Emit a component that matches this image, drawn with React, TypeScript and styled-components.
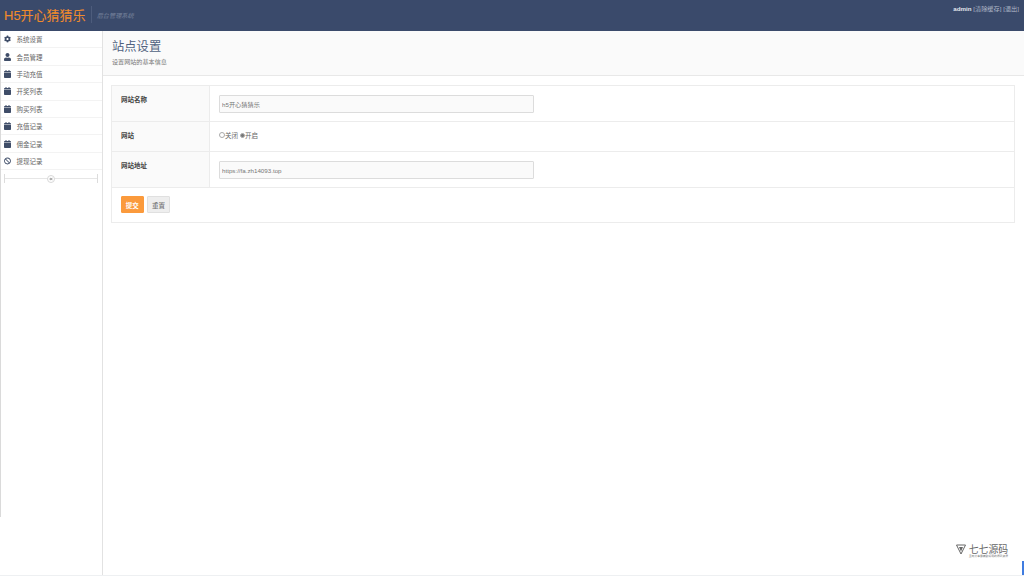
import { createGlobalStyle } from 'styled-components';
import styled from 'styled-components';
import { FaCog, FaUser, FaCalendar, FaBan, FaAngleDoubleLeft } from 'react-icons/fa';

const GlobalStyle = createGlobalStyle`
    html, body {
        margin: 0;
        padding: 0;
        height: 100%;
        background: #fff;
        overflow: hidden;
    }
    body {
        font-family: "Liberation Sans", "Noto Sans CJK SC", sans-serif;
    }
    #root {
        height: 100%;
    }
`

const Page = styled.div`
    position: relative;
    width: 1024px;
    height: 576px;
    display: flex;
    flex-direction: column;
    overflow: hidden;
`

const Navbar = styled.header`
    height: 31px;
    flex: none;
    background: #3a4a6b;
    display: flex;
    justify-content: space-between;
    padding: 0 5px 0 4px;
    box-sizing: border-box;
`

const Brand = styled.div`
    display: flex;
    align-items: center;
    height: 29px;
`

const BrandName = styled.span`
    font-size: 13px;
    color: #f08a2c;
    white-space: nowrap;
    -webkit-text-stroke: 0.1px #f08a2c;
`

const BrandSub = styled.span`
    margin-left: 5px;
    padding-left: 5px;
    height: 17px;
    line-height: 19px;
    border-left: 1px solid #4d5c7c;
    font-size: 6.2px;
    font-style: italic;
    color: #76829b;
`

const UserBar = styled.div`
    padding-top: 4.5px;
    font-size: 6.2px;
    line-height: 8px;
    color: #aeb6c6;
    white-space: nowrap;

    b {
        font-weight: 700;
        color: #e4e7ee;
    }
`

const Body = styled.div`
    flex: 1;
    display: flex;
    min-height: 0;
    border-bottom: 1px solid #eef0f2;
`

const Sidebar = styled.aside`
    position: relative;
    width: 103px;
    flex: none;
    box-sizing: border-box;
    border-right: 1px solid #e2e2e2;
    background: #fff;

    &::before {
        content: "";
        position: absolute;
        left: 0;
        top: 0;
        height: 486px;
        width: 1px;
        background: #dadada;
    }
`

const MenuItem = styled.div`
    height: 17.4px;
    box-sizing: border-box;
    display: flex;
    align-items: center;
    padding-left: 4px;
    border-bottom: 1px solid #f3f3f3;
    color: #666;
    font-size: 6.5px;
    white-space: nowrap;

    svg {
        width: 7px;
        height: 8px;
        color: #3f4d68;
        flex: none;
        margin-right: 5.5px;
    }
`

const Collapse = styled.div`
    position: relative;
    margin: 4px 4px 0 4px;
    height: 9px;
    border-left: 1px solid #dcdcdc;
    border-right: 1px solid #dcdcdc;
    display: flex;
    align-items: center;
    justify-content: center;

    &::before {
        content: "";
        position: absolute;
        left: 0;
        right: 0;
        top: 4px;
        border-top: 1px solid #e6e6e6;
    }
`

const CollapseButton = styled.span`
    position: relative;
    width: 8px;
    height: 8px;
    box-sizing: border-box;
    border: 1px solid #d8d8d8;
    border-radius: 50%;
    background: #fff;
    color: #888;
    display: flex;
    align-items: center;
    justify-content: center;

    svg {
        width: 4px;
        height: 4px;
    }
`

const Main = styled.main`
    flex: 1;
    min-width: 0;
`

const PageHeader = styled.div`
    height: 45px;
    box-sizing: border-box;
    padding: 9px 9px 0;
    background: #fafafa;
    border-bottom: 1px solid #e8e8e8;
`

const Title = styled.h1`
    margin: 0;
    font-size: 12.3px;
    line-height: 15px;
    font-weight: 400;
    color: #50627f;
`

const SubTitle = styled.p`
    margin: 3px 0 0;
    font-size: 6.1px;
    line-height: 8px;
    color: #777;
`

const Card = styled.section`
    margin: 9px 9px 0 8px;
    border: 1px solid #ececec;
`

const Row = styled.div<{ $height: number }>`
    display: flex;
    height: ${(p) => p.$height}px;
    border-bottom: 1px solid #ececec;
    box-sizing: border-box;
`

const Label = styled.div`
    width: 98px;
    flex: none;
    box-sizing: border-box;
    background: #fafafa;
    border-right: 1px solid #ececec;
    padding: 9px 0 0 9px;
    font-size: 6.5px;
    line-height: 9px;
    font-weight: 700;
    color: #444;
`

const Field = styled.div`
    flex: 1;
    padding: 9px 0 0 9px;
`

const TextInput = styled.input`
    display: block;
    width: 315px;
    height: 18px;
    box-sizing: border-box;
    padding: 0 2px;
    border: 1px solid #dcdcdc;
    border-radius: 1px;
    background: #fafafa;
    color: #777;
    font-family: inherit;
    font-size: 6.2px;
    outline: none;
`

const RadioGroup = styled.div`
    display: flex;
    align-items: center;
    height: 8px;
    font-size: 6.5px;
    color: #666;
`

const RadioLabel = styled.label`
    display: flex;
    align-items: center;
    margin-right: 2px;
`

const RadioMark = styled.span<{ $checked?: boolean }>`
    width: ${(p) => (p.$checked ? 5 : 6)}px;
    height: ${(p) => (p.$checked ? 5 : 6)}px;
    box-sizing: border-box;
    border: 1px solid #aaa;
    border-radius: 50%;
    background: ${(p) => (p.$checked ? '#777' : '#fff')};
`

const Actions = styled.div`
    height: 34px;
    box-sizing: border-box;
    padding: 8px 9px 0;
    display: flex;
    gap: 3.5px;
    align-items: flex-start;
`

const Button = styled.button<{ $primary?: boolean }>`
    width: 22.6px;
    height: 17px;
    padding: 0;
    box-sizing: border-box;
    border: 1px solid ${(p) => (p.$primary ? '#fb9a3c' : '#e0e0e0')};
    border-radius: 1px;
    background: ${(p) => (p.$primary ? '#fb9a3c' : '#eeeeee')};
    color: ${(p) => (p.$primary ? '#fff' : '#666')};
    font-family: inherit;
    font-size: 6.5px;
    font-weight: ${(p) => (p.$primary ? 700 : 400)};
`

const Watermark = styled.div`
    position: absolute;
    right: 16px;
    bottom: 17px;
    display: flex;
    align-items: flex-start;
    gap: 3px;
    color: #666;
`

const WatermarkText = styled.div`
    display: flex;
    flex-direction: column;
    font-family: "Liberation Serif", "Noto Sans CJK SC", serif;
`

const WatermarkName = styled.span`
    font-size: 9.8px;
    line-height: 11px;
`

const WatermarkSlogan = styled.span`
    font-size: 2.8px;
    line-height: 4px;
    color: #777;
    white-space: nowrap;
`

const ScrollMark = styled.div`
    position: absolute;
    right: 0;
    bottom: 1px;
    width: 2px;
    height: 14px;
    background: #3f7ce0;
`

const menu = [
    { icon: <FaCog />, text: '系统设置' },
    { icon: <FaUser />, text: '会员管理' },
    { icon: <FaCalendar />, text: '手动充值' },
    { icon: <FaCalendar />, text: '开奖列表' },
    { icon: <FaCalendar />, text: '购买列表' },
    { icon: <FaCalendar />, text: '充值记录' },
    { icon: <FaCalendar />, text: '佣金记录' },
    { icon: <FaBan />, text: '提现记录' },
];

const App = () => {
    return (
        <Page>
            <GlobalStyle />
            <Navbar>
                <Brand>
                    <BrandName>H5开心猜猜乐</BrandName>
                    <BrandSub>后台管理系统</BrandSub>
                </Brand>
                <UserBar><b>admin</b> [清除缓存] [退出]</UserBar>
            </Navbar>
            <Body>
                <Sidebar>
                    {menu.map((item) => (
                        <MenuItem key={item.text}>
                            {item.icon}
                            {item.text}
                        </MenuItem>
                    ))}
                    <Collapse>
                        <CollapseButton><FaAngleDoubleLeft /></CollapseButton>
                    </Collapse>
                </Sidebar>
                <Main>
                    <PageHeader>
                        <Title>站点设置</Title>
                        <SubTitle>设置网站的基本信息</SubTitle>
                    </PageHeader>
                    <Card>
                        <Row $height={36}>
                            <Label>网站名称</Label>
                            <Field><TextInput readOnly value="h5开心猜猜乐" /></Field>
                        </Row>
                        <Row $height={30}>
                            <Label>网站</Label>
                            <Field>
                                <RadioGroup>
                                    <RadioLabel><RadioMark />关闭</RadioLabel>
                                    <RadioLabel><RadioMark $checked />开启</RadioLabel>
                                </RadioGroup>
                            </Field>
                        </Row>
                        <Row $height={36}>
                            <Label>网站地址</Label>
                            <Field><TextInput readOnly value="https://fa.zh14093.top" /></Field>
                        </Row>
                        <Actions>
                            <Button $primary>提交</Button>
                            <Button>重置</Button>
                        </Actions>
                    </Card>
                </Main>
            </Body>
            <Watermark>
                <svg width="10" height="11" viewBox="0 0 10 11">
                    <path d="M0.5 1H9.5L5 10Z" fill="none" stroke="#666" strokeWidth="1" />
                    <path d="M3 3H7L5 7.5Z" fill="#666" />
                </svg>
                <WatermarkText>
                    <WatermarkName>七七源码</WatermarkName>
                    <WatermarkSlogan>全网分享最精致好用的源码资源</WatermarkSlogan>
                </WatermarkText>
            </Watermark>
            <ScrollMark />
        </Page>
    );
};

export default App
